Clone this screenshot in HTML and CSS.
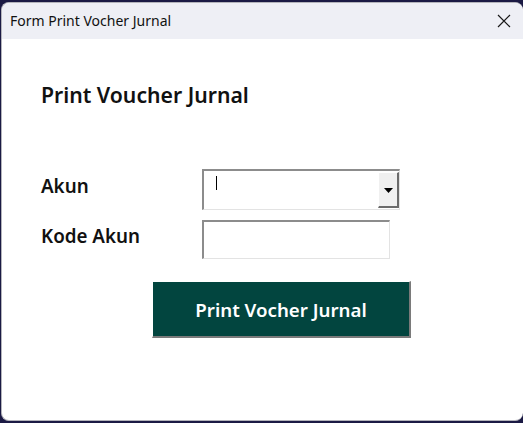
FILE: index.html
```html
<!DOCTYPE html>
<html>
<head>
<meta charset="utf-8">
<link rel="stylesheet" href="styles.css">
</head>
<body>
<div class="window">
  <div class="titlebar">
    <span class="title">Form Print Vocher Jurnal</span>
    <svg class="close" width="14" height="14" viewBox="0 0 14 14"><path d="M1 1 L13 13 M13 1 L1 13" stroke="#1a1a1a" stroke-width="1.2" fill="none"/></svg>
  </div>
  <div class="content">
    <h1 class="heading">Print Voucher Jurnal</h1>
    <div class="form">
      <label class="label">Akun</label>
      <div class="combo">
        <div class="combo-field"><span class="caret"></span></div>
        <div class="combo-btn"><svg width="9" height="5" viewBox="0 0 9 5"><path d="M0 0 H9 L4.5 5 Z" fill="#000"/></svg></div>
      </div>
      <label class="label">Kode Akun</label>
      <div class="textbox"></div>
    </div>
    <button class="print-btn">Print Vocher Jurnal</button>
  </div>
</div>
</body>
</html>
```
FILE: styles.css
```css
html, body {
  margin: 0;
  padding: 0;
}
body {
  background: #1b1a44;
  width: 523px;
  height: 423px;
  overflow: hidden;
  font-family: "Noto Sans", "Open Sans", sans-serif;
}
.window {
  margin: 2px 0 0 1px;
  height: 419px;
  background: #ffffff;
  border: 1px solid #b4b4bb;
  border-right: none;
  border-radius: 8px 8px 8px 8px;
  box-sizing: border-box;
  overflow: hidden;
  display: flex;
  flex-direction: column;
}
.titlebar {
  height: 36px;
  background: #eeeff5;
  display: flex;
  align-items: center;
  justify-content: space-between;
  padding: 0 12px 0 8px;
  flex: none;
}
.title {
  font-size: 14px;
  color: #111;
  position: relative;
  top: -1px;
}
.close {
  display: block;
}
.content {
  padding: 42px 0 0 39px;
  display: flex;
  flex-direction: column;
  align-items: flex-start;
}
.heading {
  margin: 0;
  font-size: 21.2px;
  font-weight: 600;
  color: #111;
  line-height: 28px;
}
.form {
  margin-top: 60px;
  display: grid;
  grid-template-columns: 161px auto;
  row-gap: 10px;
  align-items: center;
}
.label {
  font-size: 18.8px;
  font-weight: 600;
  color: #111;
  line-height: 24px;
  position: relative;
  top: -4px;
}
.combo {
  width: 198px;
  height: 41px;
  box-sizing: border-box;
  border-top: 2px solid #8c8c8c;
  border-left: 2px solid #8c8c8c;
  border-bottom: 1px solid #e3e3e3;
  border-right: 1px solid #e3e3e3;
  display: flex;
  background: #fff;
}
.combo-field {
  flex: 1;
  position: relative;
}
.caret {
  position: absolute;
  left: 12px;
  top: 5px;
  width: 1px;
  height: 14px;
  background: #000;
}
.combo-btn {
  width: 18px;
  margin: 1px 0 1px 0;
  background: #f0f0f0;
  border-left: 1px solid #ffffff;
  border-top: 1px solid #ffffff;
  border-right: 2px solid #6b6b6b;
  border-bottom: 2px solid #6b6b6b;
  display: flex;
  align-items: center;
  justify-content: center;
}
.combo-btn svg {
  display: block;
  margin-top: 2px;
}
.textbox {
  width: 188px;
  height: 39px;
  box-sizing: border-box;
  border-top: 2px solid #8c8c8c;
  border-left: 2px solid #8c8c8c;
  border-bottom: 1px solid #e3e3e3;
  border-right: 1px solid #e3e3e3;
  background: #fff;
}
.print-btn {
  margin: 22px 0 0 111px;
  width: 259px;
  height: 57px;
  box-sizing: border-box;
  background: #02453f;
  color: #ffffff;
  font-family: "Noto Sans", "Open Sans", sans-serif;
  font-size: 18.7px;
  font-weight: 600;
  border-top: 1px solid #ffffff;
  border-left: 1px solid #ffffff;
  border-right: 2px solid #7a7a7a;
  border-bottom: 2px solid #7a7a7a;
  padding: 0;
  cursor: pointer;
}
```
